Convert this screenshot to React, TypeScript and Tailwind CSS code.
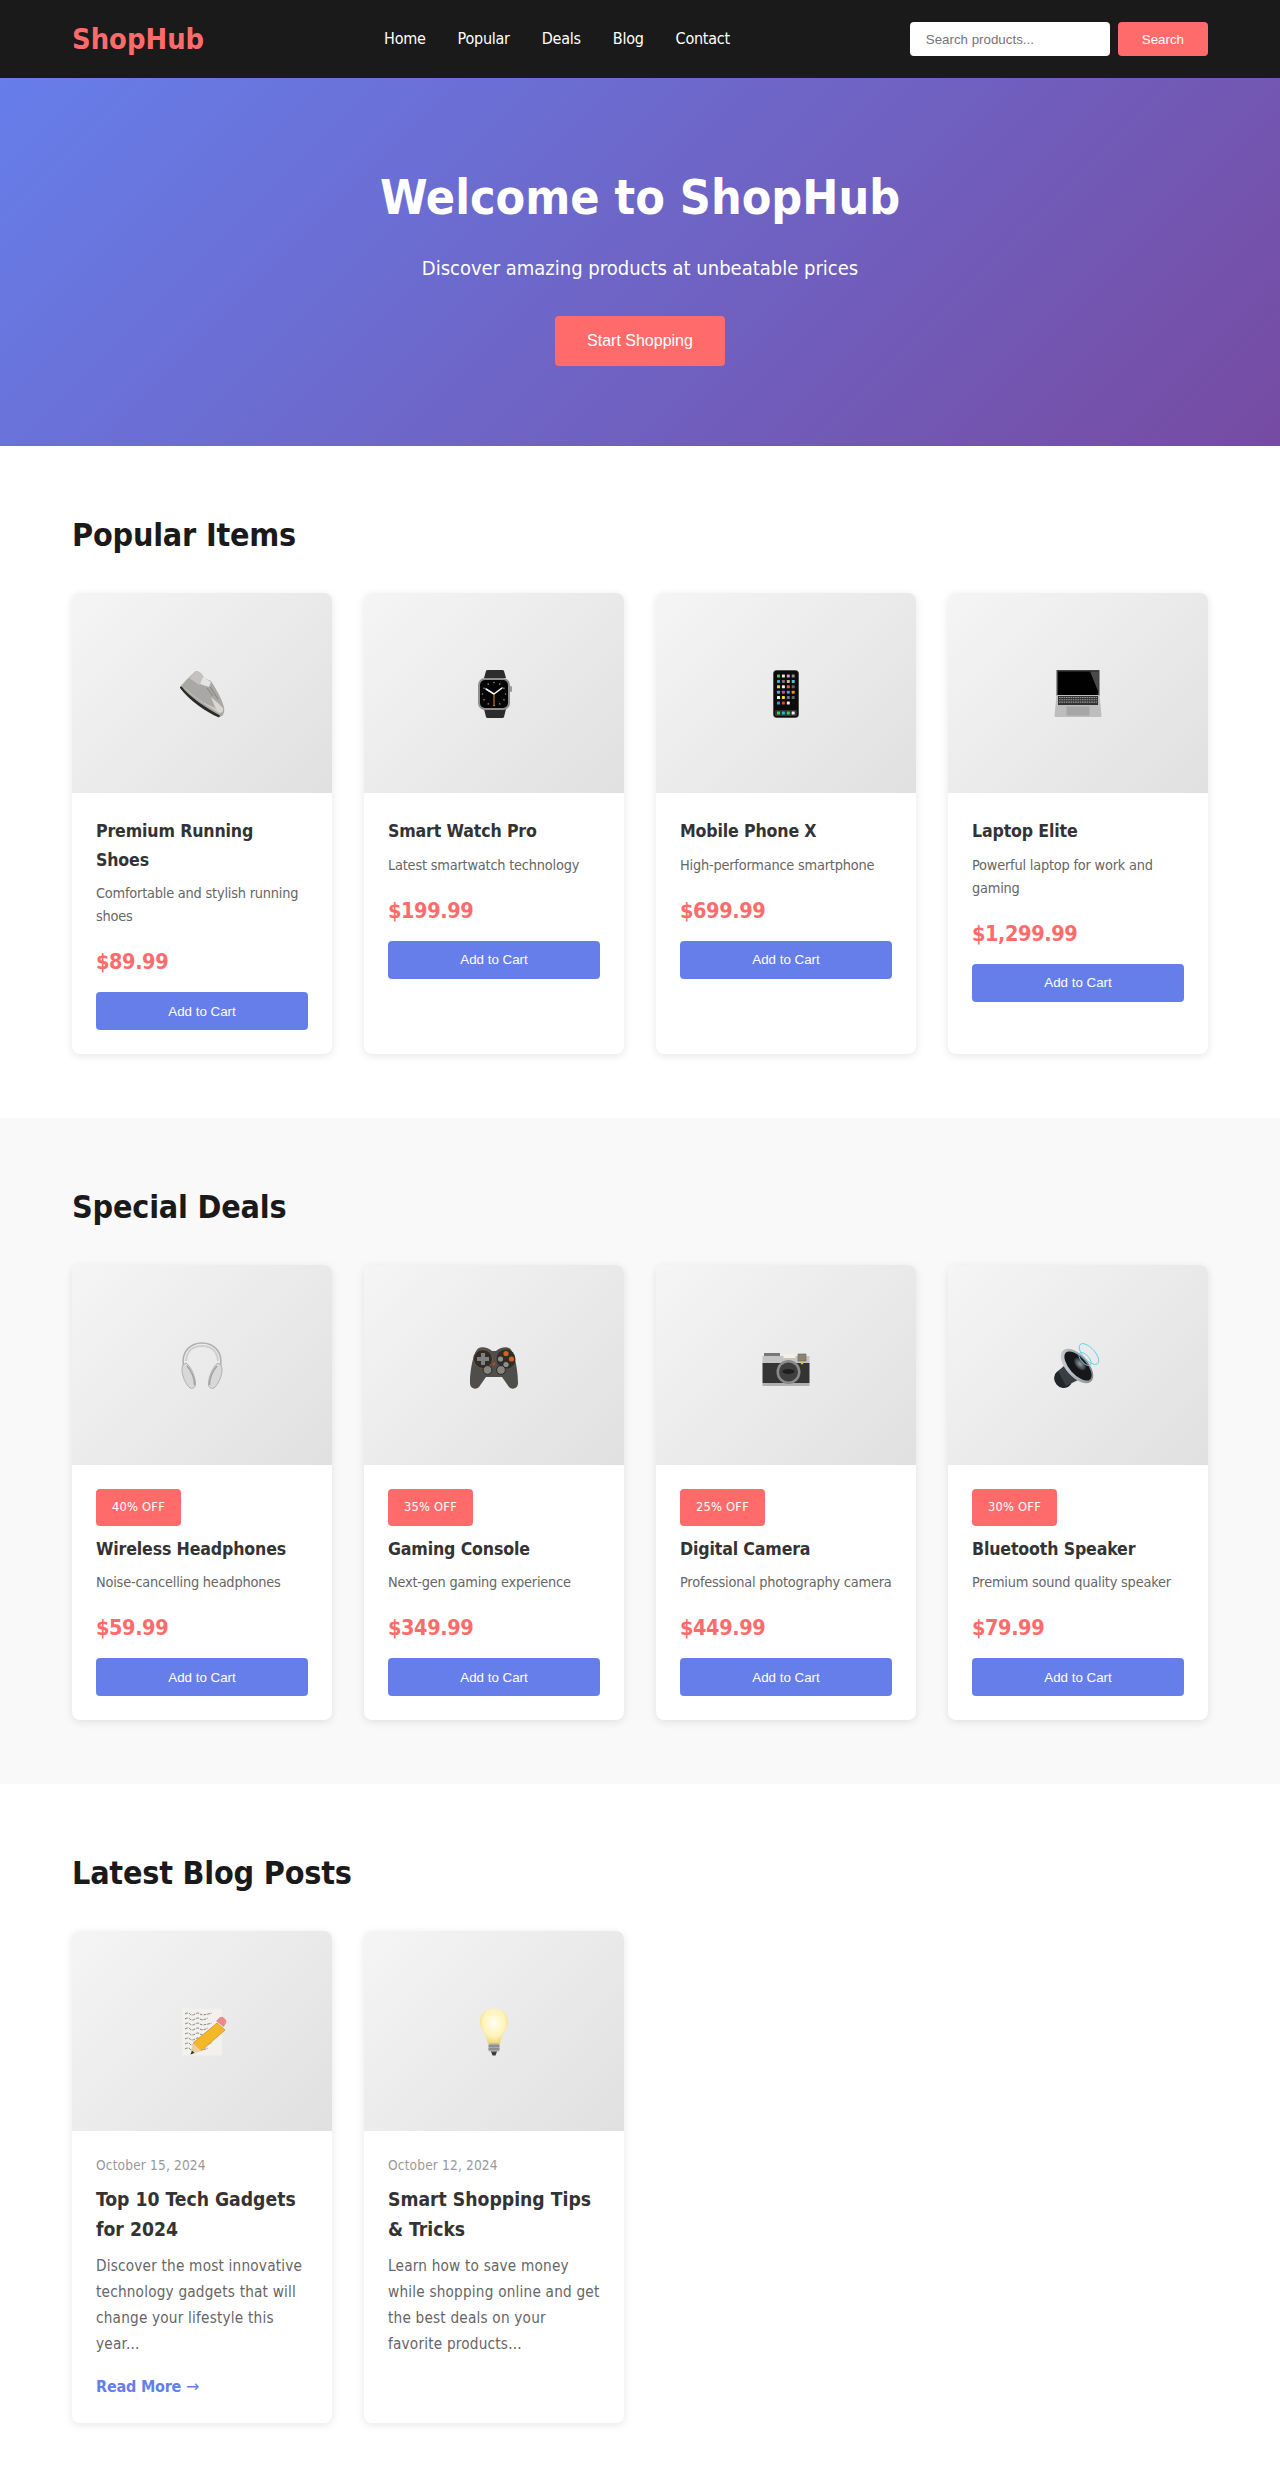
import type { ReactNode } from "react";

const Shoe = () => (
  <>
    <path d="M10 26 C15 20 22 13 26 10 C30 10 33 14 34 17 L41 20 C46 28 51 36 54 46 C55 52 53 56 49 56 C38 52 20 40 10 26 Z" fill="#aaa8a5" />
    <path d="M10 26 L11.5 25.5 C20 36 36 47 50 54.5 L49 56.5 C36 51 19 39 10 27 Z" fill="#2a2a2a" />
    <path d="M12.5 25 C20 34 36 44 50 53 C51 51 46 47 41 45 C31 41 20 32 12.5 25 Z" fill="#c9c7c3" />
    <path d="M26 10 C30 10 33 14 34 17 L29 24 C26 21 22 19 19 17 Z" fill="#c4c2bf" />
    <path d="M33 16 L41 21 L39 26 L30 23 Z" fill="#e4e4e2" />
    <path d="M41 36 L48 42 L53 47 C54 51 51 53 48 51 C45 47 43 41 41 36 Z" fill="#d8d7d4" />
    <path d="M37 27 L43 35 M40 26 L46 35 M42 29 L48 38" stroke="#8a8885" strokeWidth="1.1" />
  </>
);

const Watch = () => {
  const dots = [0, 30, 60, 90, 120, 150, 180, 210, 240, 270, 300, 330];
  return (
    <>
      <path d="M22 17 L24 10 Q24 9 26 9 L40 9 Q42 9 42 10 L44 17 Z M22 48 L24 56 Q24 57 26 57 L40 57 Q42 57 42 56 L44 48 Z" fill="#2c2c2c" />
      <rect x="16" y="17" width="32" height="32" rx="7" fill="#8f8f8f" />
      <rect x="48" y="25" width="2" height="6" rx="1" fill="#9a9a9a" />
      <rect x="18" y="19" width="28" height="28" rx="5" fill="#050505" />
      {dots.map((a) => (
        <circle key={a} cx="32" cy="21.5" r="0.8" fill="#8a8a8a" transform={`rotate(${a} 32 33)`} />
      ))}
      <path d="M32 33 L24 28 M32 33 L40 27" stroke="#fff" strokeWidth="1.5" strokeLinecap="round" />
      <path d="M32 33 L32 45" stroke="#d9952c" strokeWidth="1" />
    </>
  );
};

const Phone = () => {
  const colors = ["#41c95a", "#e8e8e8", "#d99ad8", "#8f8f8f", "#23b4e8", "#777", "#d8b58a", "#38d0e0", "#f0d040", "#f0f0f0", "#e06050", "#666", "#30c0d0", "#e040b0", "#3aa0e0", "#f09010", "#f0f0f0", "#f0e030", "#777", "#666", "#20a0e8", "#e84030", "#f0f0f0", "#111"];
  return (
    <>
      <rect x="19.5" y="9.5" width="25" height="47" rx="3" fill="#0c0c0c" stroke="#333" strokeWidth="0.6" />
      {colors.map((c, i) => (
        <rect key={i} x={23 + (i % 4) * 4.9} y={13.5 + Math.floor(i / 4) * 5.4} width="3" height="3" rx="0.6" fill={c} />
      ))}
      <rect x="21" y="49" width="22" height="6" rx="1" fill="#333" />
      {["#41c95a", "#23b4e8", "#41c95a", "#f0f0f0"].map((c, i) => (
        <rect key={i} x={23 + i * 4.9} y="50.5" width="3" height="3" rx="0.6" fill={c} />
      ))}
    </>
  );
};

const Laptop = () => (
  <>
    <path d="M10.5 9 L53.5 9 L53.5 35 L10.5 35 Z" fill="#444" />
    <path d="M12 10.5 L52 10.5 L52 34 L12 34 Z" fill="#010101" />
    <path d="M44 10.5 L52 10.5 L52 30 Z" fill="#4a4a4a" />
    <path d="M10.5 34 L53.5 34 L55.5 55 Q55.5 56 54 56 L10 56 Q8.5 56 8.5 55 Z" fill="#bdbdbd" />
    <rect x="12" y="35" width="40" height="9" fill="#333" />
    {[36.5, 38.8, 41.1].map((y) => (
      <path key={y} d={`M13 ${y} L51 ${y}`} stroke="#999" strokeWidth="1.1" strokeDasharray="1.6 0.7" />
    ))}
    <rect x="20.5" y="45.5" width="23" height="9" fill="#a6a6a6" />
  </>
);

const Headphones = () => (
  <>
    <path d="M13.5 33 C11 18 21 10 32 10 C43 10 53 18 50.5 33" fill="none" stroke="#b0b0b0" strokeWidth="1.6" />
    <path d="M16 28 C17 17 24 13 32 13 C40 13 47 17 48 28" fill="none" stroke="#cfcfcf" strokeWidth="2" />
    <path d="M13 32 C10 37 14 50 20 55 C22 56 25 55 25.5 52 C26 45 21 33 16 30 Z" fill="#d8d8d8" stroke="#a4a4a4" strokeWidth="0.8" />
    <path d="M51 32 C54 37 50 50 44 55 C42 56 39 55 38.5 52 C38 45 43 33 48 30 Z" fill="#d8d8d8" stroke="#a4a4a4" strokeWidth="0.8" />
    <path d="M17 33 C21 37 25 46 24.5 52 M47 33 C43 37 39 46 39.5 52" fill="none" stroke="#a0a0a0" strokeWidth="1.4" />
  </>
);

const Gamepad = () => (
  <>
    <path d="M17 15 C20 13 27 15 30 18 L34 18 C37 15 44 13 47 15 C52 17 56 36 56 50 C56 56 50 57 47 54 L40 44 L24 44 L17 54 C14 57 8 56 8 50 C8 36 12 17 17 15 Z" fill="#4f4e4b" />
    <circle cx="21" cy="26" r="9.5" fill="#2e2d2b" stroke="#8c5a34" strokeWidth="0.8" />
    <path d="M19 20 H23 V24 H27 V28 H23 V32 H19 V28 H15 V24 H19 Z" fill="#7f7f7c" />
    <circle cx="44" cy="26" r="9.5" fill="#2e2d2b" />
    <circle cx="44" cy="20.5" r="2.6" fill="#d9601a" />
    <circle cx="49.5" cy="26" r="2.6" fill="#d9601a" />
    <circle cx="38.5" cy="26" r="2.6" fill="#8f8f8c" />
    <circle cx="44" cy="31.5" r="2.6" fill="#8f8f8c" />
    <circle cx="32" cy="31" r="1.6" fill="#a8521c" />
    <circle cx="25.5" cy="37" r="4.4" fill="#86867f" stroke="#2b2a28" strokeWidth="1" />
    <circle cx="39" cy="37" r="4.4" fill="#86867f" stroke="#2b2a28" strokeWidth="1" />
  </>
);

const Camera = () => (
  <>
    <rect x="10" y="20" width="16" height="4" fill="#777" />
    <rect x="8.5" y="23" width="47" height="8" fill="#c4c4c4" />
    <rect x="29.5" y="21" width="12" height="4" fill="#f3f0e4" />
    <rect x="44" y="21" width="8" height="7" fill="#8f8273" stroke="#666" strokeWidth="0.6" />
    <rect x="8.5" y="30" width="47" height="20" fill="#343434" />
    <rect x="8.5" y="50" width="47" height="3" fill="#b0b0b0" />
    <circle cx="34.5" cy="39" r="12" fill="#8a8a8a" />
    <circle cx="34.5" cy="39" r="9.5" fill="#3f3f3f" />
    <ellipse cx="34.5" cy="38.5" rx="6" ry="2.6" fill="#1f1f1f" />
    <circle cx="48" cy="30" r="1.4" fill="#f0c020" />
  </>
);

const Speaker = () => (
  <>
    <defs>
      <linearGradient id="speaker-rim" x1="0" y1="0" x2="1" y2="1">
        <stop offset="0" stopColor="#d8dbde" />
        <stop offset="1" stopColor="#70767c" />
      </linearGradient>
      <radialGradient id="speaker-core" cx="0.5" cy="0.5" r="0.5">
        <stop offset="0" stopColor="#9aa0a6" />
        <stop offset="1" stopColor="#2a2d31" />
      </radialGradient>
    </defs>
    <ellipse cx="17" cy="46" rx="8.5" ry="9.5" fill="#22252a" transform="rotate(-40 17 46)" />
    <path d="M12 38 L25 27 L34 46 L20 53 Z" fill="#3a3d42" />
    <ellipse cx="31" cy="33" rx="11" ry="21" fill="url(#speaker-rim)" transform="rotate(-42 31 33)" />
    <ellipse cx="32" cy="33" rx="8.5" ry="18" fill="#15171a" transform="rotate(-42 32 33)" />
    <ellipse cx="34" cy="31" rx="4.5" ry="7.5" fill="url(#speaker-core)" transform="rotate(-42 34 31)" />
    <ellipse cx="43" cy="21" rx="6" ry="13" fill="none" stroke="#5cd3e6" strokeWidth="0.9" transform="rotate(-42 43 21)" />
    <ellipse cx="39" cy="26" rx="4" ry="8" fill="none" stroke="#5cd3e6" strokeWidth="0.9" transform="rotate(-42 39 26)" />
  </>
);

const Memo = () => (
  <>
    <rect x="12" y="9.6" width="40" height="47" fill="#f2f1ee" />
    {[14, 19, 24, 29, 34, 39, 44, 49].map((y, i) => (
      <path key={y} d={`M15 ${y + 1} q3 -2 5 0 t5 0 t5 0 t${i % 2 ? 8 : 12} -1`} fill="none" stroke="#555" strokeWidth="0.7" strokeDasharray="3 1" />
    ))}
    <path d="M47 23 L55 30 L31 51 L23 43 Z" transform="translate(0 1)" fill="#f4b72a" stroke="#c98d18" strokeWidth="0.7" />
    <path d="M46 22 L49.5 18.5 Q52 17 54 19 L56 21 Q57 23 55.5 25 L53.5 28 Z" fill="#ea8b8b" />
    <path d="M23 44 L31.5 52 L20.5 55.5 Z" fill="#eccf9e" />
    <path d="M20.5 55.5 L22 51.5 L24.5 54 Z" fill="#333" />
  </>
);

const Bulb = () => (
  <>
    <defs>
      <radialGradient id="bulb-glow" cx="0.5" cy="0.4" r="0.6">
        <stop offset="0" stopColor="#fffef2" />
        <stop offset="0.65" stopColor="#fff3b8" />
        <stop offset="1" stopColor="#ecd376" />
      </radialGradient>
    </defs>
    <path d="M32 9.6 C41 9.6 46 16 46 23 C46 30 40 34 38 45 L26 45 C24 34 18 30 18 23 C18 16 23 9.6 32 9.6 Z" fill="url(#bulb-glow)" />
    <rect x="26.5" y="44.5" width="11" height="8" rx="1.5" fill="#a9a9a6" />
    <path d="M26.5 47 H37.5 M26.5 50 H37.5" stroke="#6e6e6c" strokeWidth="0.9" />
    <path d="M29 52.5 H35 L33.5 56.5 H30.5 Z" fill="#3c3c3c" />
  </>
);

const Emoji = ({ children }: { children: ReactNode }) => (
  <div className="flex h-[200px] items-center justify-center bg-[linear-gradient(135deg,#f5f5f5_0%,#e0e0e0_100%)]">
    <svg width="64" height="64" viewBox="0 0 64 64">
      {children}
    </svg>
  </div>
);

type Product = { icon: ReactNode; name: string; desc: string; price: string; off?: string };

const POPULAR: Product[] = [
  { icon: <Shoe />, name: "Premium Running Shoes", desc: "Comfortable and stylish running shoes", price: "$89.99" },
  { icon: <Watch />, name: "Smart Watch Pro", desc: "Latest smartwatch technology", price: "$199.99" },
  { icon: <Phone />, name: "Mobile Phone X", desc: "High-performance smartphone", price: "$699.99" },
  { icon: <Laptop />, name: "Laptop Elite", desc: "Powerful laptop for work and gaming", price: "$1,299.99" },
];

const DEALS: Product[] = [
  { icon: <Headphones />, name: "Wireless Headphones", desc: "Noise-cancelling headphones", price: "$59.99", off: "40% OFF" },
  { icon: <Gamepad />, name: "Gaming Console", desc: "Next-gen gaming experience", price: "$349.99", off: "35% OFF" },
  { icon: <Camera />, name: "Digital Camera", desc: "Professional photography camera", price: "$449.99", off: "25% OFF" },
  { icon: <Speaker />, name: "Bluetooth Speaker", desc: "Premium sound quality speaker", price: "$79.99", off: "30% OFF" },
];

const POSTS = [
  {
    icon: <Memo />,
    date: "October 15, 2024",
    title: "Top 10 Tech Gadgets for 2024",
    text: "Discover the most innovative technology gadgets that will change your lifestyle this year...",
    link: true,
  },
  {
    icon: <Bulb />,
    date: "October 12, 2024",
    title: "Smart Shopping Tips & Tricks",
    text: "Learn how to save money while shopping online and get the best deals on your favorite products...",
    link: false,
  },
];

function ProductCard({ p }: { p: Product }) {
  return (
    <div className="overflow-hidden rounded-lg bg-white shadow-[0_2px_8px_rgba(0,0,0,0.1)]">
      <Emoji>{p.icon}</Emoji>
      <div className="p-6">
        {p.off && (
          <span className="mb-[9px] inline-block rounded bg-[#ff6b6b] px-4 py-2 align-top text-[12.8px] leading-[20.48px] tracking-[0.2px] text-white">{p.off}</span>
        )}
        <h3 className="mb-2 text-[17.6px] leading-[28.16px] font-bold tracking-[-0.15px] text-[#333]">{p.name}</h3>
        <p className="mb-4 text-[14.4px] leading-[23.04px] tracking-[-0.2px] text-[#666]">{p.desc}</p>
        <div className="mb-[12.8px] text-[21.5px] leading-[35.84px] font-bold tracking-[-0.4px] text-[#ff6b6b]">{p.price}</div>
        <button className="w-full rounded bg-[#667eea] py-[11.2px] font-['Liberation_Sans',Arial,sans-serif] text-[13.33px] leading-[15px] text-white">
          Add to Cart
        </button>
      </div>
    </div>
  );
}

function Section({ title, bg, children }: { title: string; bg?: string; children: ReactNode }) {
  return (
    <section className={bg}>
      <div className="mx-auto max-w-[1200px] px-8 py-16">
        <h2 className="mb-8 text-[32px] leading-[51.2px] font-bold tracking-[-0.2px] text-[#1a1a1a]">{title}</h2>
        <div className="grid grid-cols-4 gap-8">{children}</div>
      </div>
    </section>
  );
}

export default function App() {
  return (
    <div className="bg-white font-['DejaVu_Sans_Condensed','DejaVu_Sans',sans-serif] text-[#333]">
      <header className="bg-[#1a1a1a]">
        <div className="mx-auto flex max-w-[1200px] items-center justify-between px-8 py-4">
          <div className="text-[28.8px] leading-[46px] font-bold text-[#ff6b6b]">ShopHub</div>
          <nav className="flex gap-8 text-base leading-[25.6px] tracking-[-0.25px] text-white">
            <a>Home</a>
            <a>Popular</a>
            <a>Deals</a>
            <a>Blog</a>
            <a>Contact</a>
          </nav>
          <div className="flex gap-2 font-['Liberation_Sans',Arial,sans-serif] text-[13.33px] leading-[15px]">
            <input
              placeholder="Search products..."
              className="w-[200px] rounded bg-white px-4 py-[9.6px] text-[#333] placeholder:text-[#757575]"
            />
            <button className="rounded bg-[#ff6b6b] px-6 py-[9.6px] text-white">Search</button>
          </div>
        </div>
      </header>

      <section className="bg-[linear-gradient(135deg,#667eea_0%,#764ba2_100%)] pt-[81px] pb-20 text-center text-white">
        <h1 className="mb-4 text-5xl leading-[76.8px] font-bold">Welcome to ShopHub</h1>
        <p className="mb-8 text-xl leading-8">Discover amazing products at unbeatable prices</p>
        <button className="rounded bg-[#ff6b6b] px-8 py-4 font-['Liberation_Sans',Arial,sans-serif] text-base leading-[18.4px] text-white">
          Start Shopping
        </button>
      </section>

      <Section title="Popular Items">
        {POPULAR.map((p) => (
          <ProductCard key={p.name} p={p} />
        ))}
      </Section>

      <Section title="Special Deals" bg="bg-[#f9f9f9]">
        {DEALS.map((p) => (
          <ProductCard key={p.name} p={p} />
        ))}
      </Section>

      <Section title="Latest Blog Posts">
        {POSTS.map((b) => (
          <div key={b.title} className="overflow-hidden rounded-lg bg-white shadow-[0_2px_8px_rgba(0,0,0,0.1)]">
            <Emoji>{b.icon}</Emoji>
            <div className="p-6">
              <div className="mb-2 text-[13.6px] leading-[21.76px] tracking-[0.15px] text-[#999]">{b.date}</div>
              <h3 className="mb-2 text-[19.2px] leading-[30.72px] font-bold text-[#333]">{b.title}</h3>
              <p className="mb-4 text-[15.2px] leading-[25.84px] tracking-[0.2px] text-[#666]">{b.text}</p>
              {b.link && (
                <a className="block leading-[25.6px] font-bold tracking-[-0.2px] text-[#667eea]">
                  Read More <span className="font-['DejaVu_Sans',sans-serif] font-normal">→</span>
                </a>
              )}
            </div>
          </div>
        ))}
      </Section>
    </div>
  );
}
